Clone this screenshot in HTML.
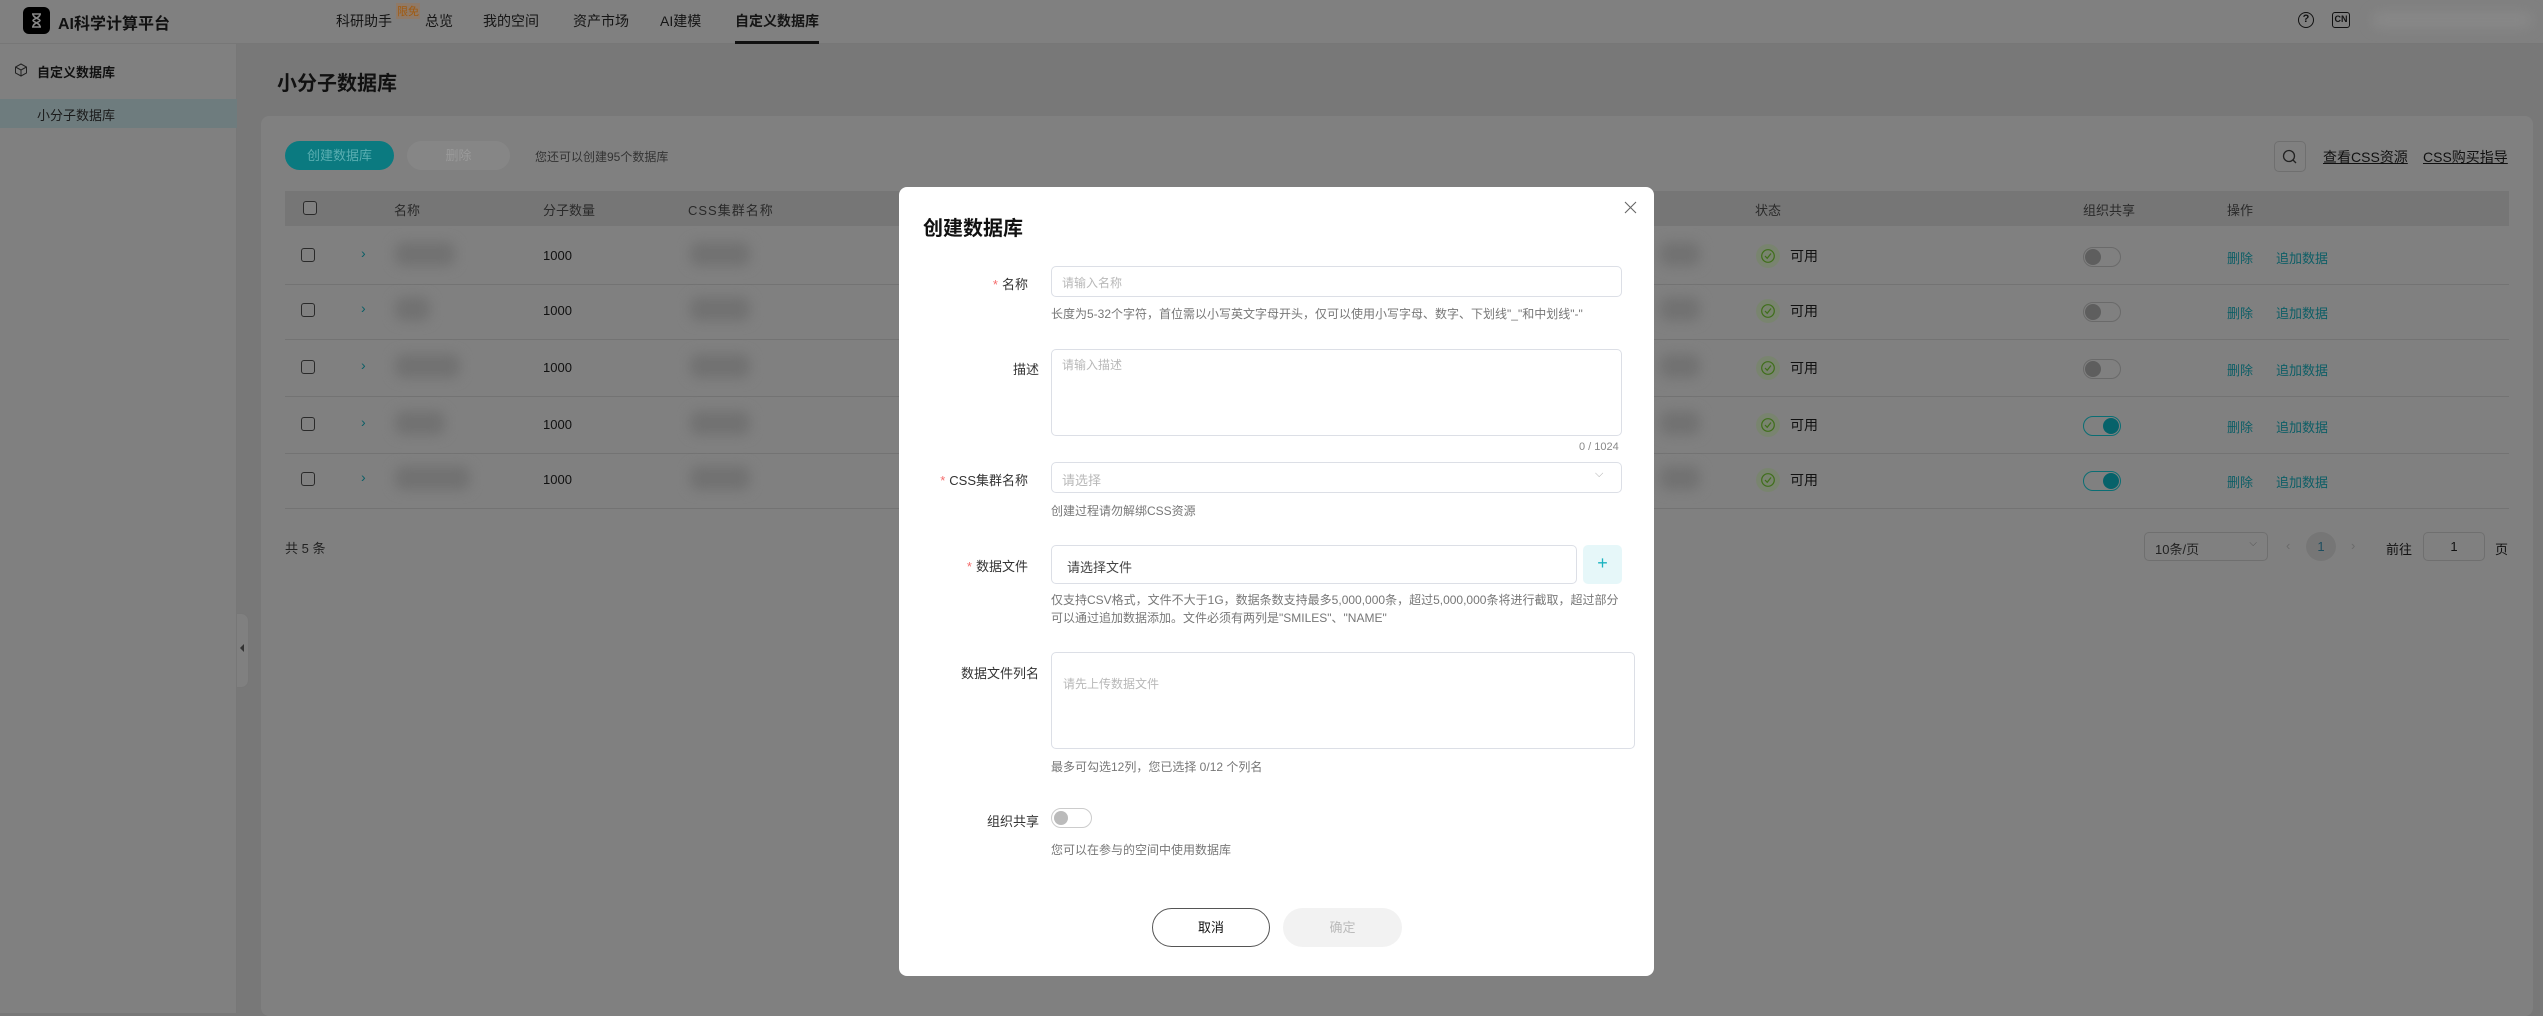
<!DOCTYPE html>
<html><head><meta charset="utf-8"><style>
*{margin:0;padding:0;box-sizing:border-box}
body{width:2543px;height:1013px;overflow:hidden;background:#787878;font-family:"Liberation Sans","Noto Sans CJK SC",sans-serif;color:#111;position:relative}
.a{position:absolute;white-space:nowrap}
.top{left:0;top:0;width:2543px;height:44px;background:#808080;border-bottom:1px solid #777}
.side{left:0;top:44px;width:237px;height:969px;background:#808080;border-right:1px solid #777}
.card{left:261px;top:116px;width:2272px;height:900px;background:#808080;border-radius:8px}
.nav{top:11px;font-size:14px;color:#151515}
.th{top:200px;font-size:13px;color:#2a2a2a}
.cb{width:14px;height:14px;border:1px solid #2a2a2a;border-radius:3px;background:#808080}
.blur{background:#717171;filter:blur(6px);border-radius:8px}
.row{left:285px;width:2224px;height:1px;background:#737373}
.lnk{font-size:13px;color:#0d5e66}
.tg{width:38px;height:20px;border-radius:10px;border:1px solid #6a6a6a;background:#808080}
.tg i{position:absolute;left:1px;top:1px;width:16px;height:16px;border-radius:50%;background:#5e5e5e}
.tg.on{border-color:#0a6e74;background:#808080}
.tg.on i{left:19px;background:#06626a}
.modal{left:899px;top:187px;width:755px;height:789px;background:#fff;border-radius:8px}
.lab{font-size:13px;color:#333;text-align:right;width:200px}
.lab b{color:#f56c6c;font-weight:normal;margin-right:4px}
.inp{border:1px solid #dcdfe6;border-radius:5px;background:#fff}
.ph{font-size:12px;color:#b8b8b8}
.help{font-size:12px;color:#777;line-height:18px}
</style></head><body>
<div class="a top"></div>
<div class="a" style="left:23px;top:7px;width:27px;height:27px;background:#000;border-radius:6px"></div>
<svg class="a" style="left:27px;top:11px" width="19" height="19" viewBox="0 0 19 19"><path d="M5 3h9M5 16h9M6 3c0 4 7 5 7 6.5S6 12 6 16M13 3c0 4-7 5-7 6.5S13 12 13 16" stroke="#888" stroke-width="1.6" fill="none"/></svg>
<div class="a" style="left:58px;top:10px;font-size:16px;font-weight:bold;color:#111">AI科学计算平台</div>
<div class="a nav" style="left:336px">科研助手</div>
<div class="a" style="left:396px;top:3px;font-size:11px;color:#a05a10;background:#8f7a68;padding:0 1px">限免</div>
<div class="a nav" style="left:425px">总览</div>
<div class="a nav" style="left:483px">我的空间</div>
<div class="a nav" style="left:573px">资产市场</div>
<div class="a nav" style="left:660px">AI建模</div>
<div class="a nav" style="left:735px;font-weight:bold">自定义数据库</div>
<div class="a" style="left:735px;top:41px;width:84px;height:3px;background:#111"></div>
<div class="a" style="left:2298px;top:12px;width:16px;height:16px;border:1.5px solid #111;border-radius:50%;font-size:11px;text-align:center;line-height:13px;font-weight:bold">?</div>
<div class="a" style="left:2332px;top:12px;width:18px;height:16px;border:1.5px solid #111;border-radius:3px;font-size:9px;text-align:center;line-height:13px;font-weight:bold">CN</div>
<div class="a blur" style="left:2372px;top:12px;width:160px;height:16px;background:#888"></div>

<div class="a side"></div>
<svg class="a" style="left:14px;top:63px" width="14" height="14" viewBox="0 0 14 14"><path d="M7 1l5.5 3v6L7 13 1.5 10V4zM1.5 4L7 7l5.5-3M7 7v6" stroke="#222" fill="none"/></svg>
<div class="a" style="left:37px;top:62px;font-size:13px;font-weight:bold;color:#111">自定义数据库</div>
<div class="a" style="left:0;top:99px;width:237px;height:29px;background:#6e7c7e"></div>
<div class="a" style="left:37px;top:105px;font-size:13px;color:#1a1a1a">小分子数据库</div>
<div class="a" style="left:237px;top:613px;width:12px;height:75px;background:#808080;border-radius:0 8px 8px 0;border:1px solid #777;border-left:none"></div>
<div class="a" style="left:240px;top:644px;width:0;height:0;border:4px solid transparent;border-right:4px solid #333;border-left:none"></div>

<div class="a" style="left:277px;top:67px;font-size:20px;font-weight:bold;color:#111">小分子数据库</div>
<div class="a card"></div>
<div class="a" style="left:285px;top:141px;width:109px;height:29px;background:#0b7a80;border-radius:15px;color:#5aaeb1;font-size:13px;text-align:center;line-height:29px">创建数据库</div>
<div class="a" style="left:407px;top:141px;width:103px;height:29px;background:#868686;border-radius:15px;color:#9a9a9a;font-size:13px;text-align:center;line-height:29px">删除</div>
<div class="a" style="left:535px;top:148px;font-size:12px;color:#333">您还可以创建95个数据库</div>
<div class="a" style="left:2274px;top:141px;width:32px;height:31px;border:1px solid #6f6f6f;border-radius:5px"></div>
<svg class="a" style="left:2281px;top:148px" width="18" height="18" viewBox="0 0 18 18"><circle cx="8" cy="8" r="5.5" stroke="#222" stroke-width="1.3" fill="none"/><path d="M12 12l3 3" stroke="#222" stroke-width="1.3"/></svg>
<div class="a" style="left:2323px;top:147px;font-size:14px;color:#111;text-decoration:underline">查看CSS资源</div>
<div class="a" style="left:2423px;top:147px;font-size:14px;color:#111;text-decoration:underline">CSS购买指导</div>

<div class="a" style="left:285px;top:191px;width:2224px;height:35px;background:#767676"></div>
<div class="a cb" style="left:303px;top:201px"></div>
<div class="a th" style="left:394px">名称</div>
<div class="a th" style="left:543px">分子数量</div>
<div class="a th" style="left:688px;letter-spacing:1px">CSS集群名称</div>
<div class="a th" style="left:1755px">状态</div>
<div class="a th" style="left:2083px">组织共享</div>
<div class="a th" style="left:2227px">操作</div>

<div id="rows"></div>
<script>
var ys=[256,311,368,425,480],on=[0,0,0,1,1],w=[60,35,65,50,75],h='';
ys.forEach(function(y,i){
h+='<div class="a cb" style="left:301px;top:'+(y-8)+'px"></div>';
h+='<div class="a" style="left:361px;top:'+(y-11)+'px;color:#0a5e66;font-size:14px">›</div>';
h+='<div class="a blur" style="left:395px;top:'+(y-14)+'px;width:'+w[i]+'px;height:24px"></div>';
h+='<div class="a" style="left:543px;top:'+(y-8)+'px;font-size:13px">1000</div>';
h+='<div class="a blur" style="left:690px;top:'+(y-14)+'px;width:60px;height:24px"></div>';
h+='<div class="a blur" style="left:1660px;top:'+(y-14)+'px;width:40px;height:24px"></div>';
h+='<div class="a" style="left:1756px;top:'+(y-12)+'px;width:24px;height:24px;border-radius:50%;background:#79846f"></div>';
h+='<svg class="a" style="left:1760px;top:'+(y-8)+'px" width="16" height="16" viewBox="0 0 16 16"><circle cx="8" cy="8" r="6.3" stroke="#3f6e1a" stroke-width="1.2" fill="none"/><path d="M5 8l2.2 2.3L11 5.5" stroke="#3f6e1a" stroke-width="1.2" fill="none"/></svg>';
h+='<div class="a" style="left:1790px;top:'+(y-10)+'px;font-size:14px">可用</div>';
h+='<div class="a tg'+(on[i]?' on':'')+'" style="left:2083px;top:'+(y-9)+'px"><i></i></div>';
h+='<div class="a lnk" style="left:2227px;top:'+(y-8)+'px">删除</div><div class="a lnk" style="left:2276px;top:'+(y-8)+'px">追加数据</div>';
h+='<div class="a row" style="top:'+(y+28)+'px"></div>';
});
document.getElementById('rows').innerHTML=h;
</script>
<div class="a" style="left:285px;top:538px;font-size:13px;color:#222">共 5 条</div>
<div class="a" style="left:2144px;top:532px;width:124px;height:29px;border:1px solid #6f6f6f;border-radius:5px;font-size:13px;padding:6px 10px;color:#222">10条/页<span style="position:absolute;right:10px;top:5px;font-size:10px;color:#555">⌵</span></div>
<div class="a" style="left:2286px;top:538px;font-size:13px;color:#6a6a6a">‹</div>
<div class="a" style="left:2306px;top:532px;width:30px;height:29px;border-radius:50%;background:#767676;text-align:center;line-height:29px;font-size:13px;color:#1e4e60">1</div>
<div class="a" style="left:2351px;top:538px;font-size:13px;color:#6a6a6a">›</div>
<div class="a" style="left:2386px;top:539px;font-size:13px">前往</div>
<div class="a" style="left:2423px;top:532px;width:62px;height:29px;border:1px solid #6f6f6f;border-radius:5px;text-align:center;line-height:28px;font-size:13px">1</div>
<div class="a" style="left:2495px;top:539px;font-size:13px">页</div>

<div class="a modal"></div>
<div class="a" style="left:923px;top:212px;font-size:20px;font-weight:bold;color:#111">创建数据库</div>
<svg class="a" style="left:1624px;top:201px" width="13" height="13" viewBox="0 0 13 13"><path d="M1 1l11 11M12 1L1 12" stroke="#666" stroke-width="1.1"/></svg>

<div class="a lab" style="left:828px;top:274px"><b>*</b>名称</div>
<div class="a inp" style="left:1051px;top:266px;width:571px;height:31px"></div>
<div class="a ph" style="left:1062px;top:274px">请输入名称</div>
<div class="a help" style="left:1051px;top:305px">长度为5-32个字符，首位需以小写英文字母开头，仅可以使用小写字母、数字、下划线"_"和中划线"-"</div>

<div class="a lab" style="left:839px;top:359px">描述</div>
<div class="a inp" style="left:1051px;top:349px;width:571px;height:87px"></div>
<div class="a ph" style="left:1062px;top:356px">请输入描述</div>
<div class="a" style="left:1579px;top:441px;font-size:11px;color:#888">0 / 1024</div>

<div class="a lab" style="left:828px;top:470px"><b>*</b>CSS集群名称</div>
<div class="a inp" style="left:1051px;top:462px;width:571px;height:31px"></div>
<div class="a" style="left:1062px;top:470px;font-size:13px;color:#b8b8b8">请选择</div>
<div class="a" style="left:1595px;top:468px;font-size:11px;color:#aaa">⌵</div>
<div class="a help" style="left:1051px;top:502px">创建过程请勿解绑CSS资源</div>

<div class="a lab" style="left:828px;top:556px"><b>*</b>数据文件</div>
<div class="a inp" style="left:1051px;top:545px;width:526px;height:39px"></div>
<div class="a" style="left:1067px;top:557px;font-size:13px;color:#444">请选择文件</div>
<div class="a" style="left:1583px;top:545px;width:39px;height:39px;background:#e6f7f9;border-radius:5px;text-align:center;line-height:37px;font-size:18px;color:#1bb3c0">+</div>
<div class="a help" style="left:1051px;top:591px">仅支持CSV格式，文件不大于1G，数据条数支持最多5,000,000条，超过5,000,000条将进行截取，超过部分<br>可以通过追加数据添加。文件必须有两列是"SMILES"、"NAME"</div>

<div class="a lab" style="left:839px;top:663px">数据文件列名</div>
<div class="a inp" style="left:1051px;top:652px;width:584px;height:97px"></div>
<div class="a ph" style="left:1063px;top:675px">请先上传数据文件</div>
<div class="a help" style="left:1051px;top:758px">最多可勾选12列，您已选择 0/12 个列名</div>

<div class="a lab" style="left:839px;top:811px">组织共享</div>
<div class="a" style="left:1051px;top:808px;width:41px;height:20px;border:1px solid #ccc;border-radius:10px"><i style="position:absolute;left:2px;top:2px;width:14px;height:14px;border-radius:50%;background:#bbb"></i></div>
<div class="a help" style="left:1051px;top:841px">您可以在参与的空间中使用数据库</div>

<div class="a" style="left:1152px;top:908px;width:118px;height:39px;border:1px solid #555;border-radius:20px;text-align:center;line-height:37px;font-size:13px">取消</div>
<div class="a" style="left:1283px;top:908px;width:119px;height:39px;background:#f2f2f2;border-radius:20px;text-align:center;line-height:39px;font-size:13px;color:#bbb">确定</div>
</body></html>
